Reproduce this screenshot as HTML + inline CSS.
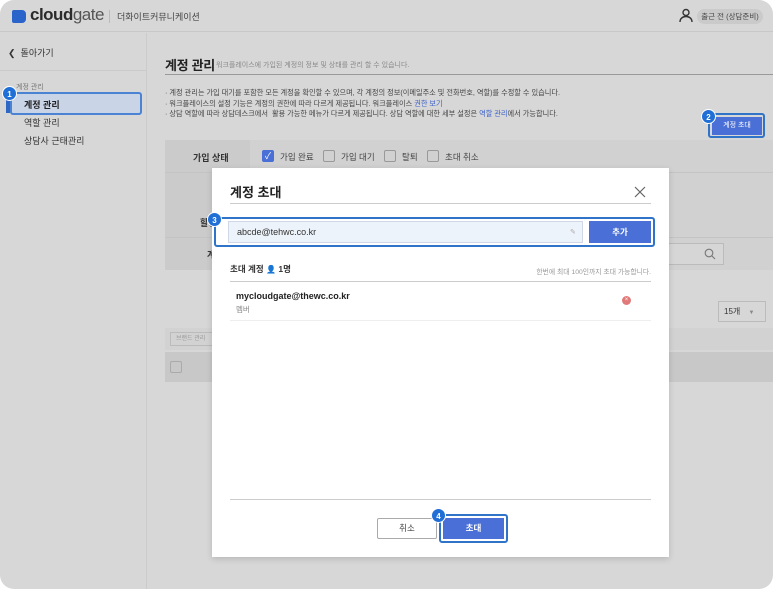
<!DOCTYPE html>
<html><head><meta charset="utf-8"><style>
*{box-sizing:border-box;margin:0;padding:0}
body{width:773px;height:589px;overflow:hidden;background:#fff;font-family:"Liberation Sans","Noto Sans CJK KR",sans-serif;color:#333;position:relative}
.a{position:absolute}
.frame{left:0;top:0;width:773px;height:589px;background:#d7d7d7;border-radius:14px;overflow:hidden}
.t{white-space:nowrap}
.badge{width:15px;height:15px;border-radius:50%;background:#1f6fd6;color:#fff;font-size:8px;font-weight:bold;text-align:center;line-height:15px;border:1px solid #fff}
.hl{border:2px solid #2f74c9;border-radius:3px}
</style></head><body>
<div class="a frame">
 <div class="a" style="left:0;top:0;width:773px;height:32px;border-bottom:1px solid #c8c8c8"></div>
 <div class="a" style="left:12px;top:10px;width:14px;height:13px;background:#2a63c9;border-radius:2px 4px 4px 2px"></div>
 <div class="a t" style="left:30px;top:5px;font-size:17px;color:#2b2b2b;letter-spacing:-.5px;font-weight:bold">cloud<span style="color:#555;font-weight:normal">gate</span></div>
 <div class="a" style="left:109px;top:10px;width:1px;height:13px;background:#bbb"></div>
 <div class="a t" style="left:117px;top:10px;font-size:9px;color:#444">더화이트커뮤니케이션</div>
 <svg class="a" style="left:679px;top:8px" width="14" height="15" viewBox="0 0 14 15"><circle cx="7" cy="4.5" r="3" fill="none" stroke="#333" stroke-width="1.4"/><path d="M1 14c0-3.5 2.7-5.5 6-5.5s6 2 6 5.5" fill="none" stroke="#333" stroke-width="1.4"/></svg>
 <div class="a t" style="left:697px;top:9px;width:66px;height:15px;border-radius:8px;background:#cacaca;font-size:7.5px;line-height:15px;text-align:center;color:#444">출근 전 (상담준비)</div>
 <div class="a" style="left:146px;top:33px;width:1px;height:556px;background:#cbcbcb"></div>
 <div class="a t" style="left:8px;top:46px;font-size:9px;color:#333">&#10094;&nbsp; 돌아가기</div>
 <div class="a" style="left:0;top:70px;width:146px;height:1px;background:#cbcbcb"></div>
 <div class="a t" style="left:16px;top:82px;font-size:7px;color:#777">계정 관리</div>
 <div class="a" style="left:10px;top:92px;width:132px;height:23px;background:#c9d4e6;border:2px solid #4a83d4;border-radius:3px"></div>
 <div class="a" style="left:6px;top:95px;width:4px;height:18px;background:#2f68c4"></div>
 <div class="a t" style="left:24px;top:98px;font-size:9px;font-weight:bold;color:#222">계정 관리</div>
 <div class="a badge" style="left:2px;top:86px">1</div>
 <div class="a t" style="left:24px;top:116px;font-size:9px;color:#333">역할 관리</div>
 <div class="a t" style="left:24px;top:134px;font-size:9px;color:#333">상담사 근태관리</div>
 <div class="a t" style="left:165px;top:55px;font-size:13px;font-weight:bold;color:#222;letter-spacing:-.3px">계정 관리</div>
 <div class="a t" style="left:216px;top:60px;font-size:7px;color:#888">워크플레이스에 가입된 계정의 정보 및 상태를 관리 할 수 있습니다.</div>
 <div class="a" style="left:165px;top:74px;width:608px;height:1px;background:#999"></div>
 <div class="a t" style="left:165px;top:88px;font-size:7.2px;line-height:10.5px;color:#444">· 계정 관리는 가입 대기를 포함한 모든 계정을 확인할 수 있으며, 각 계정의 정보(이메일주소 및 전화번호, 역할)를 수정할 수 있습니다.<br>· 워크플레이스의 설정 기능은 계정의 권한에 따라 다르게 제공됩니다. 워크플레이스 <span style="color:#3c62c8">권한 보기</span><br>· 상담 역할에 따라 상담데스크에서 &nbsp;활용 가능한 메뉴가 다르게 제공됩니다. 상담 역할에 대한 세부 설정은 <span style="color:#3c62c8">역할 관리</span>에서 가능합니다.</div>
 <div class="a hl" style="left:708px;top:113px;width:57px;height:25px"></div>
 <div class="a t" style="left:712px;top:117px;width:50px;height:18px;background:#4a6fd6;color:#fff;font-size:7px;line-height:18px;text-align:center">계정 초대</div>
 <div class="a badge" style="left:701px;top:109px">2</div>
 <div class="a" style="left:165px;top:140px;width:608px;height:130px;background:#d1d1d1"></div>
 <div class="a" style="left:165px;top:140px;width:85px;height:130px;background:#cbcbcb"></div>
 <div class="a" style="left:165px;top:172px;width:608px;height:1px;background:#c4c4c4"></div>
 <div class="a" style="left:165px;top:237px;width:608px;height:1px;background:#c4c4c4"></div>
 <div class="a t" style="left:193px;top:151px;font-size:9px;font-weight:bold;color:#333">가입 상태</div>
 <div class="a" style="left:262px;top:150px;width:12px;height:12px;background:#4a6fd6;border-radius:2px;color:#fff;font-size:9px;line-height:12px;text-align:center">✓</div>
 <div class="a t" style="left:280px;top:151px;font-size:8.5px;color:#444">가입 완료</div>
 <div class="a" style="left:323px;top:150px;width:12px;height:12px;border:1px solid #999;border-radius:2px"></div>
 <div class="a t" style="left:341px;top:151px;font-size:8.5px;color:#444">가입 대기</div>
 <div class="a" style="left:384px;top:150px;width:12px;height:12px;border:1px solid #999;border-radius:2px"></div>
 <div class="a t" style="left:402px;top:151px;font-size:8.5px;color:#444">탈퇴</div>
 <div class="a" style="left:427px;top:150px;width:12px;height:12px;border:1px solid #999;border-radius:2px"></div>
 <div class="a t" style="left:445px;top:151px;font-size:8.5px;color:#444">초대 취소</div>
 <div class="a t" style="left:200px;top:216px;font-size:9px;font-weight:bold;color:#333">할당</div>
 <div class="a t" style="left:207px;top:248px;font-size:9px;font-weight:bold;color:#333">계</div>
 <div class="a" style="left:660px;top:243px;width:64px;height:22px;border:1px solid #bbb;background:#d6d6d6"></div>
 <svg class="a" style="left:704px;top:248px" width="12" height="12"><circle cx="5" cy="5" r="3.8" fill="none" stroke="#777" stroke-width="1.1"/><path d="M8 8l3 3" stroke="#777" stroke-width="1.1"/></svg>
 <div class="a t" style="left:718px;top:301px;width:48px;height:21px;border:1px solid #bbb;font-size:8px;line-height:19px;padding-left:5px;color:#333">15개 <span style="color:#888;font-size:6px;margin-left:6px">▼</span></div>
 <div class="a" style="left:165px;top:328px;width:608px;height:22px;background:#d2d2d2"></div>
 <div class="a t" style="left:170px;top:332px;width:50px;height:14px;border:1px solid #bbb;font-size:6px;line-height:12px;padding-left:5px;color:#999">브랜드 관리</div>
 <div class="a" style="left:165px;top:352px;width:608px;height:30px;background:#c8c8c8"></div>
 <div class="a" style="left:170px;top:361px;width:12px;height:12px;border:1px solid #aaa;border-radius:2px"></div>
 <div class="a" style="left:212px;top:168px;width:457px;height:389px;background:#fff;box-shadow:0 2px 6px rgba(0,0,0,.15)"></div>
 <div class="a t" style="left:230px;top:182px;font-size:13px;font-weight:bold;color:#222">계정 초대</div>
 <svg class="a" style="left:634px;top:186px" width="12" height="12"><path d="M1 1l10 10M11 1L1 11" stroke="#666" stroke-width="1.2"/></svg>
 <div class="a" style="left:230px;top:203px;width:421px;height:1px;background:#ccc"></div>
 <div class="a hl" style="left:214px;top:217px;width:441px;height:30px"></div>
 <div class="a t" style="left:228px;top:221px;width:355px;height:22px;background:#edf3fb;border:1px solid #cfd8e4;font-size:9px;line-height:20px;padding-left:8px;color:#333">abcde@tehwc.co.kr</div>
 <div class="a t" style="left:570px;top:228px;font-size:7px;color:#aaa">✎</div>
 <div class="a t" style="left:589px;top:221px;width:62px;height:22px;background:#4a6fd6;color:#fff;font-size:8.5px;font-weight:bold;line-height:22px;text-align:center">추가</div>
 <div class="a badge" style="left:207px;top:212px">3</div>
 <div class="a t" style="left:230px;top:263px;font-size:8.5px;font-weight:bold;color:#333">초대 계정 <span style="font-size:8px">👤</span> 1명</div>
 <div class="a t" style="left:451px;top:266px;width:200px;text-align:right;font-size:6.8px;color:#999">한번에 최대 100인까지 초대 가능합니다.</div>
 <div class="a" style="left:230px;top:281px;width:421px;height:1px;background:#ccc"></div>
 <div class="a t" style="left:236px;top:291px;font-size:9px;font-weight:bold;color:#222">mycloudgate@thewc.co.kr</div>
 <div class="a t" style="left:236px;top:304px;font-size:7.5px;color:#888">멤버</div>
 <div class="a" style="left:622px;top:296px;width:9px;height:9px;border-radius:50%;background:#e07a7a;color:#fff;font-size:6px;line-height:9px;text-align:center">×</div>
 <div class="a" style="left:230px;top:320px;width:421px;height:1px;background:#eee"></div>
 <div class="a" style="left:230px;top:499px;width:421px;height:1px;background:#ccc"></div>
 <div class="a t" style="left:377px;top:518px;width:60px;height:21px;border:1px solid #aaa;border-radius:2px;font-size:8.5px;line-height:19px;text-align:center;color:#444">취소</div>
 <div class="a hl" style="left:439px;top:514px;width:69px;height:29px"></div>
 <div class="a t" style="left:443px;top:518px;width:61px;height:21px;background:#4a6fd6;color:#fff;font-size:8.5px;line-height:21px;text-align:center;font-weight:bold">초대</div>
 <div class="a badge" style="left:431px;top:508px">4</div>
</div>
</body></html>
